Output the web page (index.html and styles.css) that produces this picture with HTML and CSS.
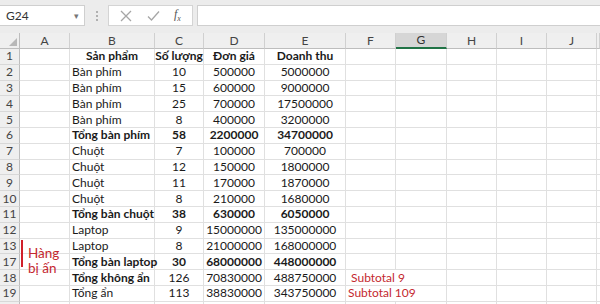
FILE: index.html
```html
<!DOCTYPE html>
<html>
<head>
<meta charset="utf-8">
<link rel="stylesheet" href="styles.css">
</head>
<body>
<div class="bar">
  <div class="namebox"><span>G24</span><span class="dd">▾</span></div>
  <div class="dots"><i></i><i></i><i></i></div>
  <div class="btns">
    <svg width="12" height="12" viewBox="0 0 12 12"><path d="M1 1L11 11M11 1L1 11" stroke="#a6a6a6" stroke-width="1.3" fill="none"/></svg>
    <svg width="13" height="12" viewBox="0 0 13 12"><path d="M1 6.5L4.5 10L12 1.5" stroke="#a6a6a6" stroke-width="1.3" fill="none"/></svg>
    <span class="fx">f<sub>x</sub></span>
  </div>
  <div class="input"></div>
</div>
<div class="sheet">
  <div class="row head">
    <div class="corner"><svg width="8" height="8" viewBox="0 0 8 8"><path d="M8 0V8H0Z" fill="#b8b8b8"/></svg></div>
    <div class="ch">A</div><div class="ch">B</div><div class="ch">C</div><div class="ch">D</div><div class="ch">E</div><div class="ch">F</div><div class="ch sel">G</div><div class="ch">H</div><div class="ch">I</div><div class="ch">J</div><div class="ch"></div>
  </div>
  <div class="row b"><div class="rh">1</div><div class="c"></div><div class="c n">Sản phẩm</div><div class="c n">Số lượng</div><div class="c n">Đơn giá</div><div class="c n">Doanh thu</div><div class="c"></div><div class="c"></div><div class="c"></div><div class="c"></div><div class="c"></div><div class="c"></div></div>
  <div class="row"><div class="rh">2</div><div class="c"></div><div class="c">Bàn phím</div><div class="c n">10</div><div class="c n">500000</div><div class="c n">5000000</div><div class="c"></div><div class="c"></div><div class="c"></div><div class="c"></div><div class="c"></div><div class="c"></div></div>
  <div class="row"><div class="rh">3</div><div class="c"></div><div class="c">Bàn phím</div><div class="c n">15</div><div class="c n">600000</div><div class="c n">9000000</div><div class="c"></div><div class="c"></div><div class="c"></div><div class="c"></div><div class="c"></div><div class="c"></div></div>
  <div class="row"><div class="rh">4</div><div class="c"></div><div class="c">Bàn phím</div><div class="c n">25</div><div class="c n">700000</div><div class="c n">17500000</div><div class="c"></div><div class="c"></div><div class="c"></div><div class="c"></div><div class="c"></div><div class="c"></div></div>
  <div class="row"><div class="rh">5</div><div class="c"></div><div class="c">Bàn phím</div><div class="c n">8</div><div class="c n">400000</div><div class="c n">3200000</div><div class="c"></div><div class="c"></div><div class="c"></div><div class="c"></div><div class="c"></div><div class="c"></div></div>
  <div class="row b"><div class="rh">6</div><div class="c"></div><div class="c">Tổng bàn phím</div><div class="c n">58</div><div class="c n">2200000</div><div class="c n">34700000</div><div class="c"></div><div class="c"></div><div class="c"></div><div class="c"></div><div class="c"></div><div class="c"></div></div>
  <div class="row"><div class="rh">7</div><div class="c"></div><div class="c">Chuột</div><div class="c n">7</div><div class="c n">100000</div><div class="c n">700000</div><div class="c"></div><div class="c"></div><div class="c"></div><div class="c"></div><div class="c"></div><div class="c"></div></div>
  <div class="row"><div class="rh">8</div><div class="c"></div><div class="c">Chuột</div><div class="c n">12</div><div class="c n">150000</div><div class="c n">1800000</div><div class="c"></div><div class="c"></div><div class="c"></div><div class="c"></div><div class="c"></div><div class="c"></div></div>
  <div class="row"><div class="rh">9</div><div class="c"></div><div class="c">Chuột</div><div class="c n">11</div><div class="c n">170000</div><div class="c n">1870000</div><div class="c"></div><div class="c"></div><div class="c"></div><div class="c"></div><div class="c"></div><div class="c"></div></div>
  <div class="row"><div class="rh">10</div><div class="c"></div><div class="c">Chuột</div><div class="c n">8</div><div class="c n">210000</div><div class="c n">1680000</div><div class="c"></div><div class="c"></div><div class="c"></div><div class="c"></div><div class="c"></div><div class="c"></div></div>
  <div class="row b"><div class="rh">11</div><div class="c"></div><div class="c">Tổng bàn chuột</div><div class="c n">38</div><div class="c n">630000</div><div class="c n">6050000</div><div class="c"></div><div class="c"></div><div class="c"></div><div class="c"></div><div class="c"></div><div class="c"></div></div>
  <div class="row"><div class="rh">12</div><div class="c"></div><div class="c">Laptop</div><div class="c n">9</div><div class="c n">15000000</div><div class="c n">135000000</div><div class="c"></div><div class="c"></div><div class="c"></div><div class="c"></div><div class="c"></div><div class="c"></div></div>
  <div class="row"><div class="rh">13</div><div class="c"></div><div class="c">Laptop</div><div class="c n">8</div><div class="c n">21000000</div><div class="c n">168000000</div><div class="c"></div><div class="c"></div><div class="c"></div><div class="c"></div><div class="c"></div><div class="c"></div></div>
  <div class="row b"><div class="rh">17</div><div class="c"></div><div class="c">Tổng bàn laptop</div><div class="c n">30</div><div class="c n">68000000</div><div class="c n">448000000</div><div class="c"></div><div class="c"></div><div class="c"></div><div class="c"></div><div class="c"></div><div class="c"></div></div>
  <div class="row"><div class="rh">18</div><div class="c"></div><div class="c bold">Tổng không ẩn</div><div class="c n">126</div><div class="c n">70830000</div><div class="c n">488750000</div><div class="c note span2">&nbsp;Subtotal 9</div><div class="c"></div><div class="c"></div><div class="c"></div><div class="c"></div></div>
  <div class="row"><div class="rh">19</div><div class="c"></div><div class="c">Tổng ẩn</div><div class="c n">113</div><div class="c n">38830000</div><div class="c n">343750000</div><div class="c note span2">Subtotal 109</div><div class="c"></div><div class="c"></div><div class="c"></div><div class="c"></div></div>
  <div class="row"><div class="rh"></div><div class="c"></div><div class="c"></div><div class="c"></div><div class="c"></div><div class="c"></div><div class="c"></div><div class="c"></div><div class="c"></div><div class="c"></div><div class="c"></div><div class="c"></div></div>
  <div class="hidden-note"><div class="redbar"></div><div class="redtext">Hàng<br>bị ấn</div></div>
</div>
</body>
</html>
```

FILE: styles.css
```css
* { box-sizing: border-box; }
html, body { margin: 0; padding: 0; }
body {
  width: 600px;
  height: 304px;
  overflow: hidden;
  background: #ffffff;
  font-family: Lato, "Open Sans", sans-serif;
  color: #1a1a1a;
}
.bar {
  height: 33px;
  background: #ececec;
  display: flex;
  align-items: flex-start;
  padding-top: 5px;
}
.namebox {
  width: 85px;
  height: 21px;
  background: #fff;
  border: 1px solid #cfcfcf;
  border-left: none;
  display: flex;
  align-items: center;
  justify-content: space-between;
  padding: 0 5px 0 6px;
  font-size: 12px;
  color: #333;
}
.namebox .dd { font-size: 9px; color: #777; }
.dots {
  width: 23px;
  height: 21px;
  display: flex;
  flex-direction: column;
  align-items: center;
  justify-content: center;
  gap: 2px;
}
.dots i { display: block; width: 2px; height: 2px; background: #b0b0b0; }
.btns {
  width: 85px;
  height: 21px;
  background: #fff;
  border: 1px solid #d4d4d4;
  display: flex;
  align-items: center;
  justify-content: space-around;
  padding: 0 4px;
}
.fx {
  font-family: "Liberation Serif", serif;
  font-style: italic;
  font-size: 12px;
  color: #555;
}
.fx sub { font-size: 8px; }
.input {
  flex: 1;
  margin-left: 4px;
  height: 21px;
  background: #fff;
  border: 1px solid #cfcfcf;
  border-right: none;
}
.sheet { position: relative; }
.row {
  display: grid;
  grid-template-columns: 20px 50px 85px 49px 61px 81px 50px 51px 50px 50px 50px 3px;
  height: 15.8px;
  font-size: 12px;
  line-height: 14px;
}
.row.head { height: 16px; }
.row.b .c { font-weight: 700; }
.c {
  border-right: 1px solid #e0e0e0;
  border-bottom: 1px solid #e0e0e0;
  padding: 0 2px;
  white-space: nowrap;
  overflow: visible;
  display: flex;
  align-items: center;
}
.c.n { justify-content: center; }
.c.bold { font-weight: 700; }
.c.span2 { grid-column: span 2; }
.note { color: #c4282f; font-size: 12px; z-index: 1; }
.rh {
  background: #efefef;
  border-right: 1px solid #bdbdbd;
  border-bottom: 1px solid #d8d8d8;
  display: flex;
  align-items: center;
  justify-content: center;
  font-size: 12px;
  color: #444;
}
.corner {
  background: #efefef;
  border-right: 1px solid #bdbdbd;
  border-bottom: 1px solid #bdbdbd;
  display: flex;
  align-items: flex-end;
  justify-content: flex-end;
  padding: 0 2px 2px 0;
}
.ch {
  background: #efefef;
  border-right: 1px solid #d0d0d0;
  border-bottom: 1px solid #bdbdbd;
  display: flex;
  align-items: center;
  justify-content: center;
  font-size: 12px;
  color: #444;
}
.ch.sel {
  background: #d6d6d6;
  border-bottom: 2px solid #217346;
  color: #333;
}
.hidden-note {
  position: absolute;
  left: 21px;
  top: 207px;
  display: flex;
  gap: 5px;
}
.redbar { width: 2px; height: 27px; background: #d0202a; }
.redtext {
  color: #c4282f;
  font-size: 13.5px;
  line-height: 15px;
  padding-top: 6px;
}
```
